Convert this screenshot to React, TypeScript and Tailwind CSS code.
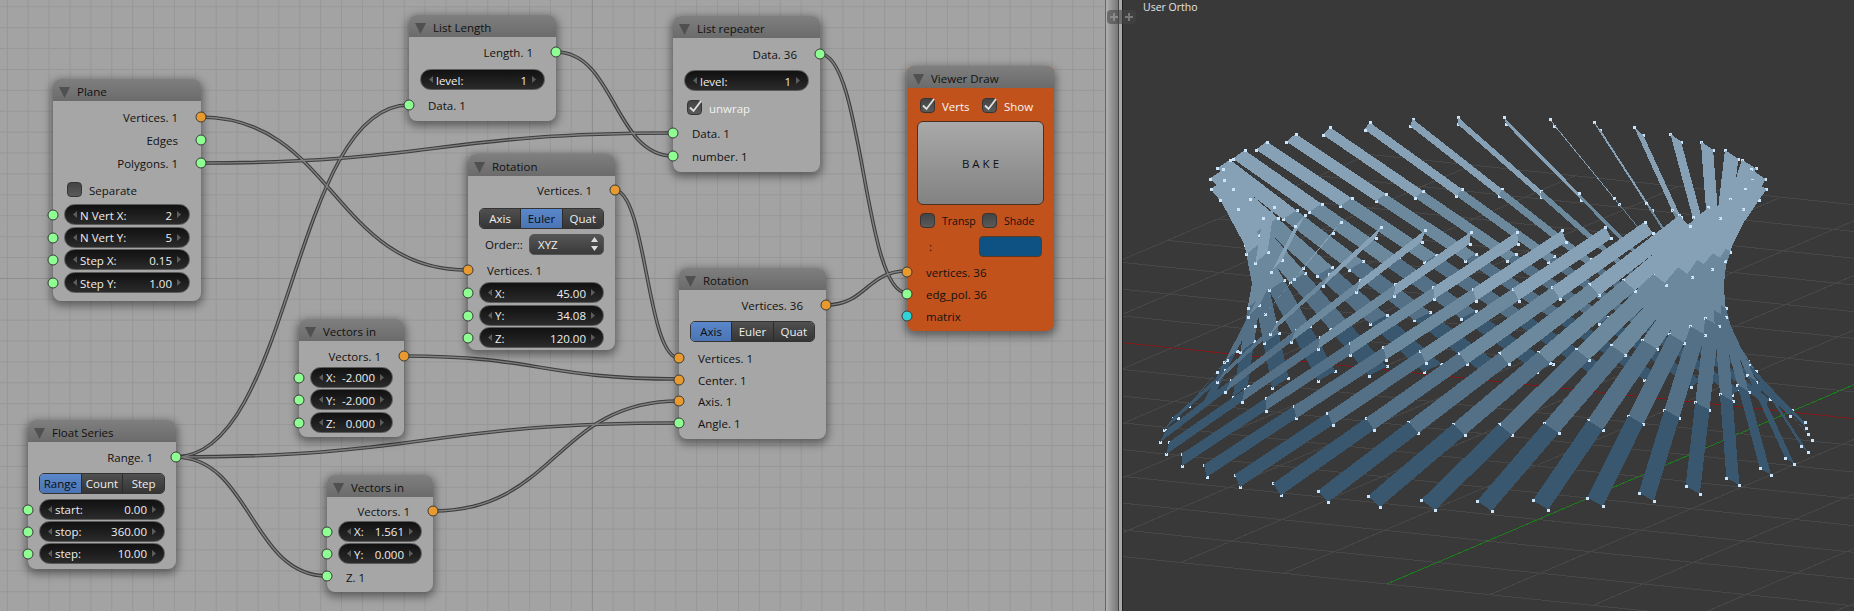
import React from 'react';

const FONT = "font-['Open_Sans','Noto_Sans',sans-serif]";

type SocketColor = 'green' | 'orange' | 'cyan';

const SOCKET_BG: Record<SocketColor, string> = {
  green: 'bg-[#8fff94]',
  orange: 'bg-[#e89a2f]',
  cyan: 'bg-[#2fd3d8]',
};

const Socket = ({ color, side }: { color: SocketColor; side: 'l' | 'r' }) => (
  <span
    className={`absolute top-1/2 z-10 h-[11px] w-[11px] -translate-y-1/2 rounded-full border border-[#3a3a3a] ${SOCKET_BG[color]} ${
      side === 'l' ? 'left-0 -translate-x-1/2' : 'right-0 translate-x-1/2'
    }`}
  />
);

const Node = ({
  title,
  className,
  body = 'bg-[#a6a6a6]',
  children,
}: {
  title: string;
  className: string;
  body?: string;
  children: React.ReactNode;
}) => (
  <div className={`absolute flex flex-col rounded-[8px] shadow-[0_3px_8px_2px_rgba(0,0,0,0.42)] ${body} ${className}`}>
    <div className="flex h-[22px] shrink-0 items-center rounded-t-[8px] bg-linear-to-b from-[#7f7f7f] to-[#6b6b6b] pt-[4px] pl-[6px] text-[11.5px] text-[#111]">
      <svg width="11" height="11" viewBox="0 0 11 11" className="mr-[7px]">
        <polygon points="0,0 11,0 5.5,11" fill="#505050" />
      </svg>
      {title}
    </div>
    {children}
  </div>
);

const Out = ({ color = 'green', className = '', children }: { color?: SocketColor; className?: string; children: React.ReactNode }) => (
  <div className={`relative flex h-[23px] items-center justify-end pt-[2px] pr-[23px] text-[11.5px] text-[#111] ${className}`}>
    {children}
    <Socket color={color} side="r" />
  </div>
);

const In = ({ color = 'green', className = '', children }: { color?: SocketColor; className?: string; children: React.ReactNode }) => (
  <div className={`relative flex h-[23px] items-center pt-[2px] pl-[19px] text-[11.5px] text-[#111] ${className}`}>
    <Socket color={color} side="l" />
    {children}
  </div>
);

const Arrow = ({ dir }: { dir: 'l' | 'r' }) => (
  <svg width="4" height="7" viewBox="0 0 4 7" className="shrink-0">
    <polygon points={dir === 'l' ? '4,0 4,7 0,3.5' : '0,0 0,7 4,3.5'} fill="#5c5c5c" />
  </svg>
);

const Field = ({ label, value, socket = true, className = '' }: { label: string; value: string; socket?: boolean; className?: string }) => (
  <div className={`relative h-[22.6px] px-[11px] ${className}`}>
    {socket && <Socket color="green" side="l" />}
    <div className="flex h-[21px] items-center rounded-full border border-[#5a5a5a] bg-linear-to-b from-[#111] to-[#2b2b2b] px-[8px] text-[11.5px] text-[#eee]">
      <Arrow dir="l" />
      <span className="mt-[2px] ml-[3px]">{label}</span>
      <span className="mt-[2px] mr-[5px] ml-auto">{value}</span>
      <Arrow dir="r" />
    </div>
  </div>
);

const Tabs = ({ items, active, className = '' }: { items: string[]; active: number; className?: string }) => (
  <div className={`mx-[11px] flex h-[21px] overflow-hidden rounded-[5px] border border-[#333] ${className}`}>
    {items.map((t, i) => (
      <div
        key={t}
        className={`flex flex-1 items-center justify-center border-l border-[#2b2b2b] pt-[1px] text-[11.5px] first:border-l-0 ${
          i === active ? 'bg-linear-to-b from-[#5b88cc] to-[#4a74b4] text-[#0d0d0d]' : 'bg-linear-to-b from-[#505050] to-[#353535] text-[#eee]'
        }`}
      >
        {t}
      </div>
    ))}
  </div>
);

const Check = ({ checked }: { checked?: boolean }) => (
  <span className="relative block h-[15px] w-[15px] shrink-0 rounded-[4px] border border-[#353535] bg-linear-to-b from-[#444] to-[#5a5a5a]">
    {checked && (
      <svg width="16" height="16" viewBox="0 0 16 16" className="absolute -top-[2px] -left-[1px]">
        <path d="M3 8.5 L6.5 12 L14 2" fill="none" stroke="#e2e2e2" strokeWidth="1.8" />
      </svg>
    )}
  </span>
);

// node noodles, all horizontal bezier handles
const WIRES: [number, number, number, number][] = [
  [200, 117, 467, 270],
  [200, 163, 673, 133],
  [175, 457, 409, 105],
  [175, 457, 679, 423],
  [175, 457, 327, 576],
  [556, 52, 673, 156],
  [820, 54, 907, 293],
  [614, 190, 679, 358],
  [403, 356, 679, 379],
  [433, 511, 679, 401],
  [826, 305, 907, 271],
];

const wirePath = ([x1, y1, x2, y2]: [number, number, number, number]) => {
  const h = Math.abs(x2 - x1) * 0.5;
  return `M${x1} ${y1} C${x1 + h} ${y1} ${x2 - h} ${y2} ${x2} ${y2}`;
};

const Wires = () => (
  <svg className="absolute inset-0 h-full w-full" fill="none">
    {WIRES.map((w, i) => (
      <path key={i} d={wirePath(w)} stroke="#3d3d3d" strokeWidth="3.6" />
    ))}
    {WIRES.map((w, i) => (
      <path key={i} d={wirePath(w)} stroke="#808080" strokeWidth="1.4" />
    ))}
  </svg>
);

// twisted plane: 36 strips, every vertex runs on an ellipse when rotated
const rad = (d: number) => (d * Math.PI) / 180;
const T1 = (p: number) => [1487.5 + 265 * Math.sin(rad(p)) - 6.5 * Math.cos(rad(p)), 174.5 - 57.5 * Math.cos(rad(p))];
const T2 = (p: number) => [1488 + 279 * Math.sin(rad(p)) - 6 * Math.cos(rad(p)), 184 - 60 * Math.cos(rad(p))];
const BL = (p: number) => [1486 + 326 * Math.sin(rad(p)), 441 - 70 * Math.cos(rad(p))];
const BU = (p: number) => [1487 + 321 * Math.sin(rad(p)), 432 - 69 * Math.cos(rad(p))];
const lerp = (a: number[], b: number[], t: number) => [a[0] + (b[0] - a[0]) * t, a[1] + (b[1] - a[1]) * t];

const QUAD_COLORS = ['#39586f', '#537087', '#6b889d', '#86a1b6'];

type Item = { depth: number; el: React.ReactNode };

const buildMesh = () => {
  const items: Item[] = [];
  for (let k = 0; k < 36; k++) {
    const p = -5 + 10 * k;
    const a0 = BL(p + 74);
    const b0 = BU(p + 76.8);
    const a1 = T2(p);
    const b1 = T1(p);
    const dep = (t: number) => (1 - t) * -326 * Math.cos(rad(p + 75)) + t * -270 * Math.cos(rad(p)) + t * 60;
    for (let q = 0; q < 4; q++) {
      const t0 = q / 4;
      const t1 = (q + 1) / 4;
      const pts = [lerp(a0, a1, t0), lerp(b0, b1, t0), lerp(b0, b1, t1), lerp(a0, a1, t1)];
      items.push({
        depth: dep((t0 + t1) / 2),
        el: <polygon key={`q${k}-${q}`} points={pts.map((c) => c.join(',')).join(' ')} fill={QUAD_COLORS[q]} />,
      });
    }
    for (let q = 0; q <= 4; q++) {
      const t = q / 4;
      [lerp(a0, a1, t), lerp(b0, b1, t)].forEach((c, j) => {
        items.push({
          depth: dep(t) + 2,
          el: <rect key={`v${k}-${q}-${j}`} x={Math.round(c[0]) - 1.5} y={Math.round(c[1]) - 1.5} width="3" height="3" fill="#cbe4fa" />,
        });
      });
    }
  }
  return items.sort((a, b) => a.depth - b.depth).map((i) => i.el);
};

const MESH = buildMesh();

// floor grid, world cell vectors measured on screen
const O = [1790, 412];
const A = [103, 10.7];
const B = [50.4, -21.5];
const gp = (x: number, y: number) => [O[0] + A[0] * x + B[0] * y, O[1] + A[1] * x + B[1] * y];

const gridLine = (from: number[], to: number[], color: string, key: string) => (
  <line key={key} x1={from[0]} y1={from[1]} x2={to[0]} y2={to[1]} stroke={color} strokeWidth="1" />
);

const Floor = () => {
  const lines: React.ReactNode[] = [];
  for (let i = -8; i <= 8; i++) {
    if (i !== 0) {
      lines.push(gridLine(gp(-8, i), gp(8, i), '#474747', `a${i}`));
      lines.push(gridLine(gp(i, -8), gp(i, 8), '#474747', `b${i}`));
    }
  }
  lines.push(gridLine(gp(-8, 0), gp(8, 0), '#7e1a1a', 'x'));
  lines.push(gridLine(gp(0, -8), gp(0, 8), '#1d7a1d', 'y'));
  return <>{lines}</>;
};

const Plus = ({ color }: { color: string }) => (
  <svg width="8" height="8" viewBox="0 0 8 8">
    <path d="M3 0h2v3h3v2H5v3H3V5H0V3h3z" fill={color} />
  </svg>
);

export default function App() {
  return (
    <div className={`relative flex h-[611px] w-[1854px] overflow-hidden ${FONT}`}>
      <div className="relative w-[1105px] shrink-0 overflow-hidden bg-[#a3a3a3] [background-image:linear-gradient(#8e8e8e,#8e8e8e),linear-gradient(#8e8e8e,#8e8e8e),linear-gradient(#979797_1px,transparent_1px),linear-gradient(90deg,#979797_1px,transparent_1px)] [background-position:0_278px,592px_0,0_6.3px,6.8px_0] [background-repeat:no-repeat,no-repeat,repeat,repeat] [background-size:100%_1px,1px_100%,20.9px_20.9px,20.9px_20.9px]">
        <Wires />

        <Node title="Plane" className="top-[79px] left-[53px] h-[222px] w-[148px]">
          <Out color="orange" className="mt-[4px]">Vertices. 1</Out>
          <Out>Edges</Out>
          <Out>Polygons. 1</Out>
          <div className="mt-[4px] flex h-[23px] items-center pl-[14px] text-[11.5px] text-[#111]">
            <Check />
            <span className="mt-[2px] ml-[7px]">Separate</span>
          </div>
          <Field className="mt-[3px]" label="N Vert X:" value="2" />
          <Field label="N Vert Y:" value="5" />
          <Field label="Step X:" value="0.15" />
          <Field label="Step Y:" value="1.00" />
        </Node>

        <Node title="List Length" className="top-[15px] left-[409px] h-[106px] w-[147px]">
          <Out className="mt-[3.5px]">Length. 1</Out>
          <Field className="mt-[5.7px]" socket={false} label="level:" value="1" />
          <In className="mt-[1.7px]">Data. 1</In>
        </Node>

        <Node title="List repeater" className="top-[16px] left-[673px] h-[156px] w-[147px]">
          <Out className="mt-[4.5px]">Data. 36</Out>
          <Field className="mt-[4.7px]" socket={false} label="level:" value="1" />
          <div className="mt-[3.7px] flex h-[23px] items-center pl-[14px] text-[11.5px] text-[#f2f2f2]">
            <Check checked />
            <span className="mt-[2px] ml-[7px]">unwrap</span>
          </div>
          <In className="mt-[2px]">Data. 1</In>
          <In>number. 1</In>
        </Node>

        <Node title="Rotation" className="top-[154px] left-[468px] h-[196px] w-[147px]">
          <Out color="orange" className="mt-[2.5px]">Vertices. 1</Out>
          <Tabs className="mt-[6.5px]" items={['Axis', 'Euler', 'Quat']} active={1} />
          <div className="mt-[4.5px] flex h-[21px] items-center pr-[11px] pl-[17px] text-[11.5px] text-[#111]">
            <span className="mt-[2px]">Order::</span>
            <div className="ml-auto flex h-[21px] w-[75px] items-center justify-between rounded-[5px] border border-[#555] bg-linear-to-b from-[#555] to-[#3a3a3a] pr-[5px] pl-[8px] text-[#eee]">
              <span className="mt-[1px]">XYZ</span>
              <svg width="7" height="14" viewBox="0 0 7 14">
                <polygon points="3.5,0 7,5 0,5" fill="#ddd" />
                <polygon points="3.5,14 7,9 0,9" fill="#ddd" />
              </svg>
            </div>
          </div>
          <In color="orange" className="mt-[3.5px]">Vertices. 1</In>
          <Field className="mt-[1px]" label="X:" value="45.00" />
          <Field label="Y:" value="34.08" />
          <Field label="Z:" value="120.00" />
        </Node>

        <Node title="Rotation" className="top-[268px] left-[679px] h-[171px] w-[147px]">
          <Out color="orange" className="mt-[3.5px]">Vertices. 36</Out>
          <Tabs className="mt-[4.5px]" items={['Axis', 'Euler', 'Quat']} active={0} />
          <In color="orange" className="mt-[4.5px]">Vertices. 1</In>
          <In color="orange" className="-mt-[1.5px]">Center. 1</In>
          <In color="orange" className="-mt-[1.5px]">Axis. 1</In>
          <In className="-mt-[1px]">Angle. 1</In>
        </Node>

        <Node title="Vectors in" className="top-[319px] left-[299px] h-[118px] w-[105px]">
          <Out color="orange" className="mt-[3.5px]">Vectors. 1</Out>
          <Field className="mt-[-1px]" label="X:" value="-2.000" />
          <Field label="Y:" value="-2.000" />
          <Field label="Z:" value="0.000" />
        </Node>

        <Node title="Float Series" className="top-[420px] left-[28px] h-[149px] w-[148px]">
          <Out className="mt-[3.5px]">Range. 1</Out>
          <Tabs className="mt-[4.5px]" items={['Range', 'Count', 'Step']} active={0} />
          <Field className="mt-[4.5px]" label="start:" value="0.00" />
          <Field className="-mt-[0.6px]" label="stop:" value="360.00" />
          <Field className="-mt-[0.6px]" label="step:" value="10.00" />
        </Node>

        <Node title="Vectors in" className="top-[475px] left-[327px] h-[117px] w-[106px]">
          <Out color="orange" className="mt-[2.5px]">Vectors. 1</Out>
          <Field className="-mt-[2px]" label="X:" value="1.561" />
          <Field label="Y:" value="0.000" />
          <In className="-mt-[1px]">Z. 1</In>
        </Node>

        <Node title="Viewer Draw" body="bg-[#c2521c]" className="top-[66px] left-[907px] h-[265px] w-[147px]">
          <div className="mt-[10px] flex h-[15px] items-center pl-[13px] text-[11.5px] text-[#f5f5f5]">
            <div className="flex w-[62px] items-center">
              <Check checked />
              <span className="mt-[2px] ml-[7px]">Verts</span>
            </div>
            <div className="flex items-center">
              <Check checked />
              <span className="mt-[2px] ml-[7px]">Show</span>
            </div>
          </div>
          <div className="mx-[10px] mt-[8px] flex h-[84px] items-center justify-center rounded-[6px] border border-[#4a3020] bg-linear-to-b from-[#a9a9a9] to-[#828282] pt-[1px] text-[11.5px] text-[#111]">
            B A K E
          </div>
          <div className="mt-[8px] flex h-[15px] items-center pl-[13px] text-[10.5px] text-[#111]">
            <div className="flex w-[62px] items-center">
              <Check />
              <span className="mt-[2px] ml-[7px]">Transp</span>
            </div>
            <div className="flex items-center">
              <Check />
              <span className="mt-[2px] ml-[7px]">Shade</span>
            </div>
          </div>
          <div className="mt-[8px] flex h-[21px] items-center pr-[12px] pl-[22px] text-[11.5px] text-[#111]">
            :
            <div className="ml-auto h-[21px] w-[63px] rounded-[4px] border border-[#5a3a20] bg-[#0d5282]" />
          </div>
          <In color="orange" className="mt-[3.5px]">vertices. 36</In>
          <In className="-mt-[1px]">edg_pol. 36</In>
          <In color="cyan" className="-mt-[1px]">matrix</In>
        </Node>
      </div>

      <div className="w-[1px] shrink-0 bg-[#666]" />
      <div className="w-[12px] shrink-0 bg-linear-to-r from-[#b0b0b0] to-[#777]" />
      <div className="w-[1px] shrink-0 bg-[#444]" />
      <div className="w-[3px] shrink-0 bg-[#a8a8a8]" />
      <div className="w-[1px] shrink-0 bg-[#1e1e1e]" />

      <div className="relative flex-1 bg-[#393939]">
        <svg viewBox="1123 0 731 611" className="h-full w-full" shapeRendering="crispEdges">
          <Floor />
          {MESH}
        </svg>
        <span className="absolute top-0 left-[20px] text-[10.5px] leading-[14px] text-[#e4e4e4]">User Ortho</span>
      </div>

      <div className="absolute top-[10px] left-[1107px] flex h-[14px] w-[29px] items-center justify-around rounded-[4px] bg-[rgba(70,70,70,0.6)]">
        <Plus color="#8a8a8a" />
        <Plus color="#777" />
      </div>
    </div>
  );
}
